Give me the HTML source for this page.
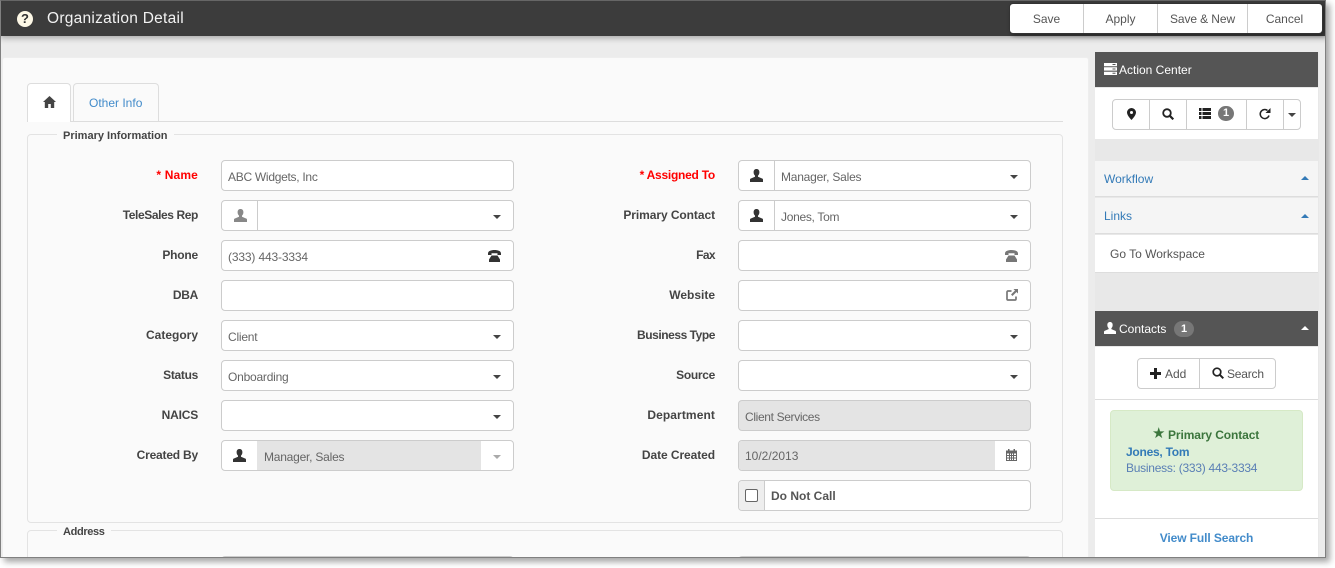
<!DOCTYPE html>
<html><head><meta charset="utf-8">
<style>
html,body{margin:0;padding:0;background:#fff}
body{width:1335px;height:568px;overflow:hidden;position:relative;font-family:"Liberation Sans",sans-serif;font-size:12px;color:#555}
div,span,svg{position:absolute;box-sizing:border-box}
#win{left:0;top:0;width:1326px;height:558px;background:#ececec;border:1px solid #808080;border-top-color:#666;overflow:hidden;box-shadow:4px 4px 6px rgba(0,0,0,.35)}
#layer{left:-1px;top:-1px;width:1335px;height:568px}
.lb{width:180px;text-align:right;font-weight:bold;font-size:12px;color:#444;line-height:16px;white-space:nowrap}
.req{color:#f00}
.f{height:31px;width:293px;background:#fff;border:1px solid #ccc;border-radius:4px;overflow:hidden}
.f.r{width:293px}
.t{line-height:16px;font-size:12px;color:#666;white-space:nowrap;top:8px;letter-spacing:-.22px}
.sep{top:0;bottom:0;width:1px;background:#ccc}
.car{width:0;height:0;border-left:4.5px solid transparent;border-right:4.5px solid transparent;border-top:4.5px solid #444}
.up{width:0;height:0;border-left:4.5px solid transparent;border-right:4.5px solid transparent;border-bottom:4.5px solid #337ab7}
.dis{background:#e4e4e4;top:0;bottom:0}
.w{color:#fff;white-space:nowrap}
.btn{color:#555;font-size:12px;text-align:center;line-height:29px;top:4px;height:29px;white-space:nowrap}
.lnk{color:#337ab7}
.ic{fill:#333}
</style></head><body>
<div id="win"><div id="layer">
  <!-- header -->
  <div style="left:0;top:0;width:1335px;height:36px;background:#3c3c3c;box-shadow:0 2px 6px rgba(0,0,0,.3)"></div>
  <div style="left:17px;top:11px;width:16px;height:16px;border-radius:50%;background:#fdf8e6;color:#333;font-weight:bold;font-size:13px;line-height:16px;text-align:center">?</div>
  <div class="w" style="left:47px;top:9px;font-size:15.5px;line-height:20px;letter-spacing:.27px;color:#f2f2f2">Organization Detail</div>
  <div style="left:1009px;top:3px;width:314px;height:31px;background:#fff;border:1px solid #333;border-radius:4px;box-shadow:2px 2px 4px rgba(0,0,0,.35)"></div>
  <div class="btn" style="left:1010px;width:73px;top:5px">Save</div>
  <div class="btn" style="left:1084px;width:73px;top:5px">Apply</div>
  <div class="btn" style="left:1158px;width:89px;top:5px;letter-spacing:-.1px">Save &amp; New</div>
  <div class="btn" style="left:1248px;width:73px;top:5px">Cancel</div>
  <div style="left:1083px;top:4px;width:1px;height:29px;background:#ccc"></div>
  <div style="left:1157px;top:4px;width:1px;height:29px;background:#ccc"></div>
  <div style="left:1247px;top:4px;width:1px;height:29px;background:#ccc"></div>

  <!-- main card -->
  <div style="left:2px;top:57px;width:1087px;height:510px;background:#fafafa;border:1px solid #eee;border-radius:3px"></div>
  <div style="left:27px;top:121px;width:1036px;height:1px;background:#ddd"></div>
  <div style="left:27px;top:83px;width:44px;height:39px;background:#fff;border:1px solid #ddd;border-bottom:0;border-radius:4px 4px 0 0"></div>
  <svg style="left:43px;top:96px" width="13" height="12" viewBox="0 0 13 12"><path fill="#444" d="M6.5 0L0 6h1.8v6h3.4V8h2.6v4h3.4V6H13z"/></svg>
  <div style="left:73px;top:83px;width:86px;height:38px;background:#fafafa;border:1px solid #ddd;border-bottom:0;border-radius:4px 4px 0 0"></div>
  <div class="lnk" style="left:89px;top:95px;font-size:12px;line-height:16px;color:#428bca">Other Info</div>

  <!-- fieldsets -->
  <div style="left:27px;top:134px;width:1036px;height:389px;border:1px solid #e3e3e3;border-radius:4px"></div>
  <div style="left:57px;top:129px;background:#fafafa;padding:0 6px;font-size:11px;font-weight:bold;line-height:14px;color:#444;white-space:nowrap">Primary Information</div>
  <div style="left:27px;top:530px;width:1036px;height:60px;border:1px solid #e3e3e3;border-radius:4px"></div>
  <div style="left:57px;top:525px;background:#fafafa;padding:0 6px;font-size:11px;font-weight:bold;line-height:14px;color:#444;letter-spacing:-.35px">Address</div>

  <!-- left labels -->
  <div class="lb req" style="left:18px;top:167px;letter-spacing:.15px">* Name</div>
  <div class="lb" style="left:18px;top:207px;letter-spacing:-.4px">TeleSales Rep</div>
  <div class="lb" style="left:18px;top:247px;letter-spacing:-.2px">Phone</div>
  <div class="lb" style="left:18px;top:287px;letter-spacing:-.3px">DBA</div>
  <div class="lb" style="left:18px;top:327px">Category</div>
  <div class="lb" style="left:18px;top:367px;letter-spacing:-.3px">Status</div>
  <div class="lb" style="left:18px;top:407px;letter-spacing:-.2px">NAICS</div>
  <div class="lb" style="left:18px;top:447px;letter-spacing:-.2px">Created By</div>

  <!-- right labels -->
  <div class="lb req" style="left:535px;top:167px;letter-spacing:-.25px">* Assigned To</div>
  <div class="lb" style="left:535px;top:207px;letter-spacing:-.07px">Primary Contact</div>
  <div class="lb" style="left:535px;top:247px;letter-spacing:-.6px">Fax</div>
  <div class="lb" style="left:535px;top:287px">Website</div>
  <div class="lb" style="left:535px;top:327px;letter-spacing:-.45px">Business Type</div>
  <div class="lb" style="left:535px;top:367px;letter-spacing:-.3px">Source</div>
  <div class="lb" style="left:535px;top:407px;letter-spacing:.1px">Department</div>
  <div class="lb" style="left:535px;top:447px;letter-spacing:-.08px">Date Created</div>

  <!-- left fields -->
  <div class="f" style="left:221px;top:160px"><div class="t" style="left:6px;letter-spacing:-.28px">ABC Widgets, Inc</div></div>
  <div class="f" style="left:221px;top:200px">
    <div class="sep" style="left:35px"></div>
    <svg style="left:12px;top:8px" width="13" height="13" viewBox="0 0 13 13"><path fill="#888" d="M6.5 0C4.6 0 3.6 1.3 3.6 3.2c0 1.5.6 2.7 1.4 3.4v1.1L.6 9.6C.2 9.800 0 10.200 0 10.700V13h13v-2.300c0-.5-.2-.9-.6-1.100L8 7.700V6.600c.8-.7 1.400-1.900 1.400-3.400C9.400 1.300 8.400 0 6.500 0z"/></svg>
    <div class="car" style="left:271px;top:14px"></div>
  </div>
  <div class="f" style="left:221px;top:240px"><div class="t" style="left:6px;letter-spacing:-.15px">(333) 443-3334</div>
    <svg style="left:266px;top:9px" width="13" height="12" viewBox="0 0 13 12"><path fill="#333" d="M0 3.500C0 1 3 0 6.500 0S13 1 13 3.500V5H9.500V3.200h-6V5H0zM3.500 5.500h6L12 9.500V12H1V9.500z"/></svg>
  </div>
  <div class="f" style="left:221px;top:280px"></div>
  <div class="f" style="left:221px;top:320px"><div class="t" style="left:6px">Client</div><div class="car" style="left:271px;top:14px"></div></div>
  <div class="f" style="left:221px;top:360px"><div class="t" style="left:6px">Onboarding</div><div class="car" style="left:271px;top:14px"></div></div>
  <div class="f" style="left:221px;top:400px"><div class="car" style="left:271px;top:14px"></div></div>
  <div class="f" style="left:221px;top:440px">
    <div class="dis" style="left:35px;width:224px"></div>
    <svg style="left:11px;top:8px" width="13" height="13" viewBox="0 0 13 13"><path fill="#333" d="M6.5 0C4.6 0 3.6 1.3 3.600 3.200c0 1.500.6 2.700 1.400 3.400v1.100L.6 9.600C.2 9.800 0 10.200 0 10.700V13h13v-2.300c0-.5-.2-.9-.6-1.100L8 7.700V6.600c.8-.7 1.400-1.900 1.400-3.400C9.400 1.300 8.400 0 6.500 0z"/></svg>
    <div class="t" style="left:42px">Manager, Sales</div>
    <div class="car" style="left:271px;top:14px;border-top-color:#aaa"></div>
  </div>

  <!-- right fields -->
  <div class="f" style="left:738px;top:160px">
    <div class="sep" style="left:35px"></div>
    <svg style="left:11px;top:8px" width="13" height="13" viewBox="0 0 13 13"><path fill="#333" d="M6.5 0C4.6 0 3.6 1.3 3.600 3.200c0 1.500.6 2.700 1.400 3.400v1.100L.6 9.600C.2 9.800 0 10.200 0 10.700V13h13v-2.300c0-.5-.2-.9-.6-1.100L8 7.700V6.600c.8-.7 1.400-1.900 1.400-3.400C9.400 1.300 8.400 0 6.500 0z"/></svg>
    <div class="t" style="left:42px">Manager, Sales</div><div class="car" style="left:271px;top:14px"></div>
  </div>
  <div class="f" style="left:738px;top:200px">
    <div class="sep" style="left:35px"></div>
    <svg style="left:11px;top:8px" width="13" height="13" viewBox="0 0 13 13"><path fill="#333" d="M6.5 0C4.6 0 3.6 1.3 3.600 3.200c0 1.500.6 2.700 1.400 3.400v1.100L.6 9.600C.2 9.800 0 10.200 0 10.700V13h13v-2.300c0-.5-.2-.9-.6-1.100L8 7.700V6.600c.8-.7 1.400-1.900 1.400-3.400C9.400 1.300 8.400 0 6.500 0z"/></svg>
    <div class="t" style="left:42px;letter-spacing:-.3px">Jones, Tom</div><div class="car" style="left:271px;top:14px"></div>
  </div>
  <div class="f" style="left:738px;top:240px">
    <svg style="left:266px;top:9px" width="13" height="12" viewBox="0 0 13 12"><path fill="#777" d="M0 3.500C0 1 3 0 6.500 0S13 1 13 3.500V5H9.500V3.200h-6V5H0zM3.500 5.500h6L12 9.500V12H1V9.500z"/></svg>
  </div>
  <div class="f" style="left:738px;top:280px">
    <svg style="left:267px;top:8px" width="12" height="12" viewBox="0 0 12 12"><path fill="none" stroke="#777" stroke-width="1.700" d="M5.500 2H2a1 1 0 0 0-1 1v7a1 1 0 0 0 1 1h7a1 1 0 0 0 1-1V7.500"/><path fill="#777" d="M7.500 0H12v4.500L10.500 3 6.500 7 5 5.500l4-4z"/></svg>
  </div>
  <div class="f" style="left:738px;top:320px"><div class="car" style="left:271px;top:14px"></div></div>
  <div class="f" style="left:738px;top:360px"><div class="car" style="left:271px;top:14px"></div></div>
  <div class="f" style="left:738px;top:400px;background:#e4e4e4"><div class="t" style="left:6px;letter-spacing:-.35px">Client Services</div></div>
  <div class="f" style="left:738px;top:440px">
    <div class="dis" style="left:0;width:256px"></div>
    <div class="t" style="left:6px;top:7px;letter-spacing:0">10/2/2013</div>
    <svg style="left:267px;top:8px" width="11" height="12" viewBox="0 0 11 12"><path fill="#666" d="M0 1.500h2V0h1.500v1.500h4V0H9v1.500h2V12H0zM1 4.500v6.500h9V4.500z"/><path fill="#666" d="M1 6h9v1H1zM1 8.500h9v1H1zM3 4.500h1V11H3zM5 4.500h1V11H5zM7 4.500h1V11H7z"/></svg>
  </div>
  <div class="f" style="left:738px;top:480px">
    <div style="left:0;top:0;bottom:0;width:26px;background:#eee;border-right:1px solid #ccc"></div>
    <div style="left:6px;top:8px;width:13px;height:13px;background:#fff;border:1px solid #666;border-radius:2px"></div>
    <div class="t" style="left:32px;top:7px;font-weight:bold;color:#555;letter-spacing:0">Do Not Call</div>
  </div>
  <!-- clipped fields at bottom -->
  <div class="f" style="left:221px;top:556px"></div>
  <div class="f" style="left:738px;top:556px"></div>

  <!-- sidebar -->
  <div style="left:1095px;top:52px;width:224px;height:520px;background:#e8e8e8"></div>
  <div style="left:1095px;top:52px;width:223px;height:35px;background:#555"></div>
  <svg style="left:1104px;top:63px" width="13" height="12" viewBox="0 0 13 12"><path fill="#fff" d="M0 0h13v3.300H0zM0 4.300h13v3.300H0zM0 8.700h13V12H0z"/><path fill="#555" d="M8.500 1h3v1h-3zM8.500 5.500h3v1h-3zM8.500 9.800h3v1h-3z"/></svg>
  <div class="w" style="left:1119px;top:62px;line-height:16px;font-size:12px">Action Center</div>
  <div style="left:1095px;top:88px;width:223px;height:51px;background:#fff"></div>
  <div style="left:1112px;top:99px;width:189px;height:31px;background:#fff;border:1px solid #ccc;border-radius:4px"></div>
  <div style="left:1149px;top:100px;width:1px;height:29px;background:#ccc"></div>
  <div style="left:1186px;top:100px;width:1px;height:29px;background:#ccc"></div>
  <div style="left:1246px;top:100px;width:1px;height:29px;background:#ccc"></div>
  <div style="left:1283px;top:100px;width:1px;height:29px;background:#ccc"></div>
  <svg style="left:1127px;top:108px" width="9" height="12" viewBox="0 0 9 12"><path fill="#222" fill-rule="evenodd" d="M4.500 0A4.500 4.500 0 0 0 0 4.500C0 7.500 4.500 12 4.500 12S9 7.500 9 4.500A4.500 4.500 0 0 0 4.500 0zm0 3a1.500 1.500 0 1 1 0 3 1.500 1.500 0 0 1 0-3z"/></svg>
  <svg style="left:1162px;top:108px" width="12" height="12" viewBox="0 0 12 12"><circle cx="5" cy="5" r="3.800" fill="none" stroke="#222" stroke-width="1.800"/><path stroke="#222" stroke-width="2.200" d="M7.800 7.800L11.300 11.300"/></svg>
  <svg style="left:1199px;top:108px" width="12" height="11" viewBox="0 0 12 11"><path fill="#222" d="M0 0h2.500v3H0zM3.500 0H12v3H3.500zM0 4h2.500v3H0zM3.500 4H12v3H3.500zM0 8h2.500v3H0zM3.500 8H12v3H3.500z"/></svg>
  <div style="left:1218px;top:106px;width:16px;height:15px;border-radius:8px;background:#777;color:#fff;font-weight:bold;font-size:11px;line-height:15px;text-align:center">1</div>
  <svg style="left:1259px;top:108px" width="12" height="12" viewBox="0 0 12 12"><path fill="none" stroke="#222" stroke-width="1.500" d="M10 7.500A4.500 4.500 0 1 1 8.500 2.500"/><path fill="#222" d="M11.500 0v5h-5z"/></svg>
  <div class="car" style="left:1288px;top:113px"></div>

  <div style="left:1095px;top:161px;width:223px;height:36px;background:#f5f5f5;border-bottom:1px solid #ddd"></div>
  <div class="lnk" style="left:1104px;top:171px;line-height:16px;font-size:12px">Workflow</div>
  <div class="up" style="left:1301px;top:176px"></div>
  <div style="left:1095px;top:198px;width:223px;height:36px;background:#f5f5f5;border-bottom:1px solid #ddd"></div>
  <div class="lnk" style="left:1104px;top:208px;line-height:16px;font-size:12px">Links</div>
  <div class="up" style="left:1301px;top:214px"></div>
  <div style="left:1095px;top:235px;width:223px;height:38px;background:#fff;border-bottom:1px solid #ddd"></div>
  <div style="left:1110px;top:246px;line-height:16px;font-size:12px;color:#555">Go To Workspace</div>

  <div style="left:1095px;top:311px;width:223px;height:35px;background:#555"></div>
  <svg style="left:1104px;top:322px" width="12" height="12" viewBox="0 0 13 13"><path fill="#fff" d="M6.5 0C4.6 0 3.6 1.3 3.600 3.200c0 1.500.6 2.700 1.400 3.400v1.100L.6 9.600C.2 9.800 0 10.200 0 10.700V13h13v-2.300c0-.5-.2-.9-.6-1.100L8 7.700V6.600c.8-.7 1.400-1.900 1.400-3.400C9.400 1.300 8.400 0 6.500 0z"/></svg>
  <div class="w" style="left:1119px;top:321px;line-height:16px;font-size:12px">Contacts</div>
  <div style="left:1174px;top:321px;width:20px;height:16px;border-radius:8px;background:#777;color:#fff;font-weight:bold;font-size:11px;line-height:16px;text-align:center">1</div>
  <div class="up" style="left:1301px;top:326px;border-bottom-color:#fff"></div>

  <div style="left:1095px;top:347px;width:223px;height:225px;background:#fff"></div>
  <div style="left:1137px;top:358px;width:139px;height:31px;background:#fff;border:1px solid #ccc;border-radius:4px"></div>
  <div style="left:1199px;top:359px;width:1px;height:29px;background:#ccc"></div>
  <svg style="left:1150px;top:368px" width="11" height="11" viewBox="0 0 11 11"><path fill="#222" d="M4 0h3v4h4v3H7v4H4V7H0V4h4z"/></svg>
  <div style="left:1165px;top:366px;line-height:16px;font-size:12px;color:#555">Add</div>
  <svg style="left:1212px;top:367px" width="12" height="12" viewBox="0 0 12 12"><circle cx="5" cy="5" r="3.800" fill="none" stroke="#222" stroke-width="1.700"/><path stroke="#222" stroke-width="2" d="M7.800 7.800L11.300 11.300"/></svg>
  <div style="left:1227px;top:366px;line-height:16px;font-size:12px;color:#555;letter-spacing:-.2px">Search</div>
  <div style="left:1095px;top:399px;width:223px;height:1px;background:#ddd"></div>
  <div style="left:1110px;top:410px;width:193px;height:81px;background:#dff0d8;border:1px solid #d6e9c6;border-radius:4px"></div>
  <div style="left:1152px;top:427px;color:#3c763d;font-size:15px;line-height:14px">★</div>
  <div style="left:1168px;top:427px;color:#3c763d;font-weight:bold;font-size:12px;line-height:16px;white-space:nowrap;letter-spacing:-.1px">Primary Contact</div>
  <div style="left:1126px;top:444px;color:#337ab7;font-weight:bold;font-size:12px;line-height:16px;letter-spacing:-.25px">Jones, Tom</div>
  <div style="left:1126px;top:460px;color:#5a7fb5;font-size:12px;line-height:16px;white-space:nowrap;letter-spacing:-.26px">Business: (333) 443-3334</div>
  <div style="left:1095px;top:518px;width:223px;height:1px;background:#ddd"></div>
  <div style="left:1095px;top:530px;width:223px;text-align:center;color:#428bca;font-weight:bold;font-size:12px;line-height:16px;letter-spacing:-.1px">View Full Search</div>
</div></div>
</body></html>
